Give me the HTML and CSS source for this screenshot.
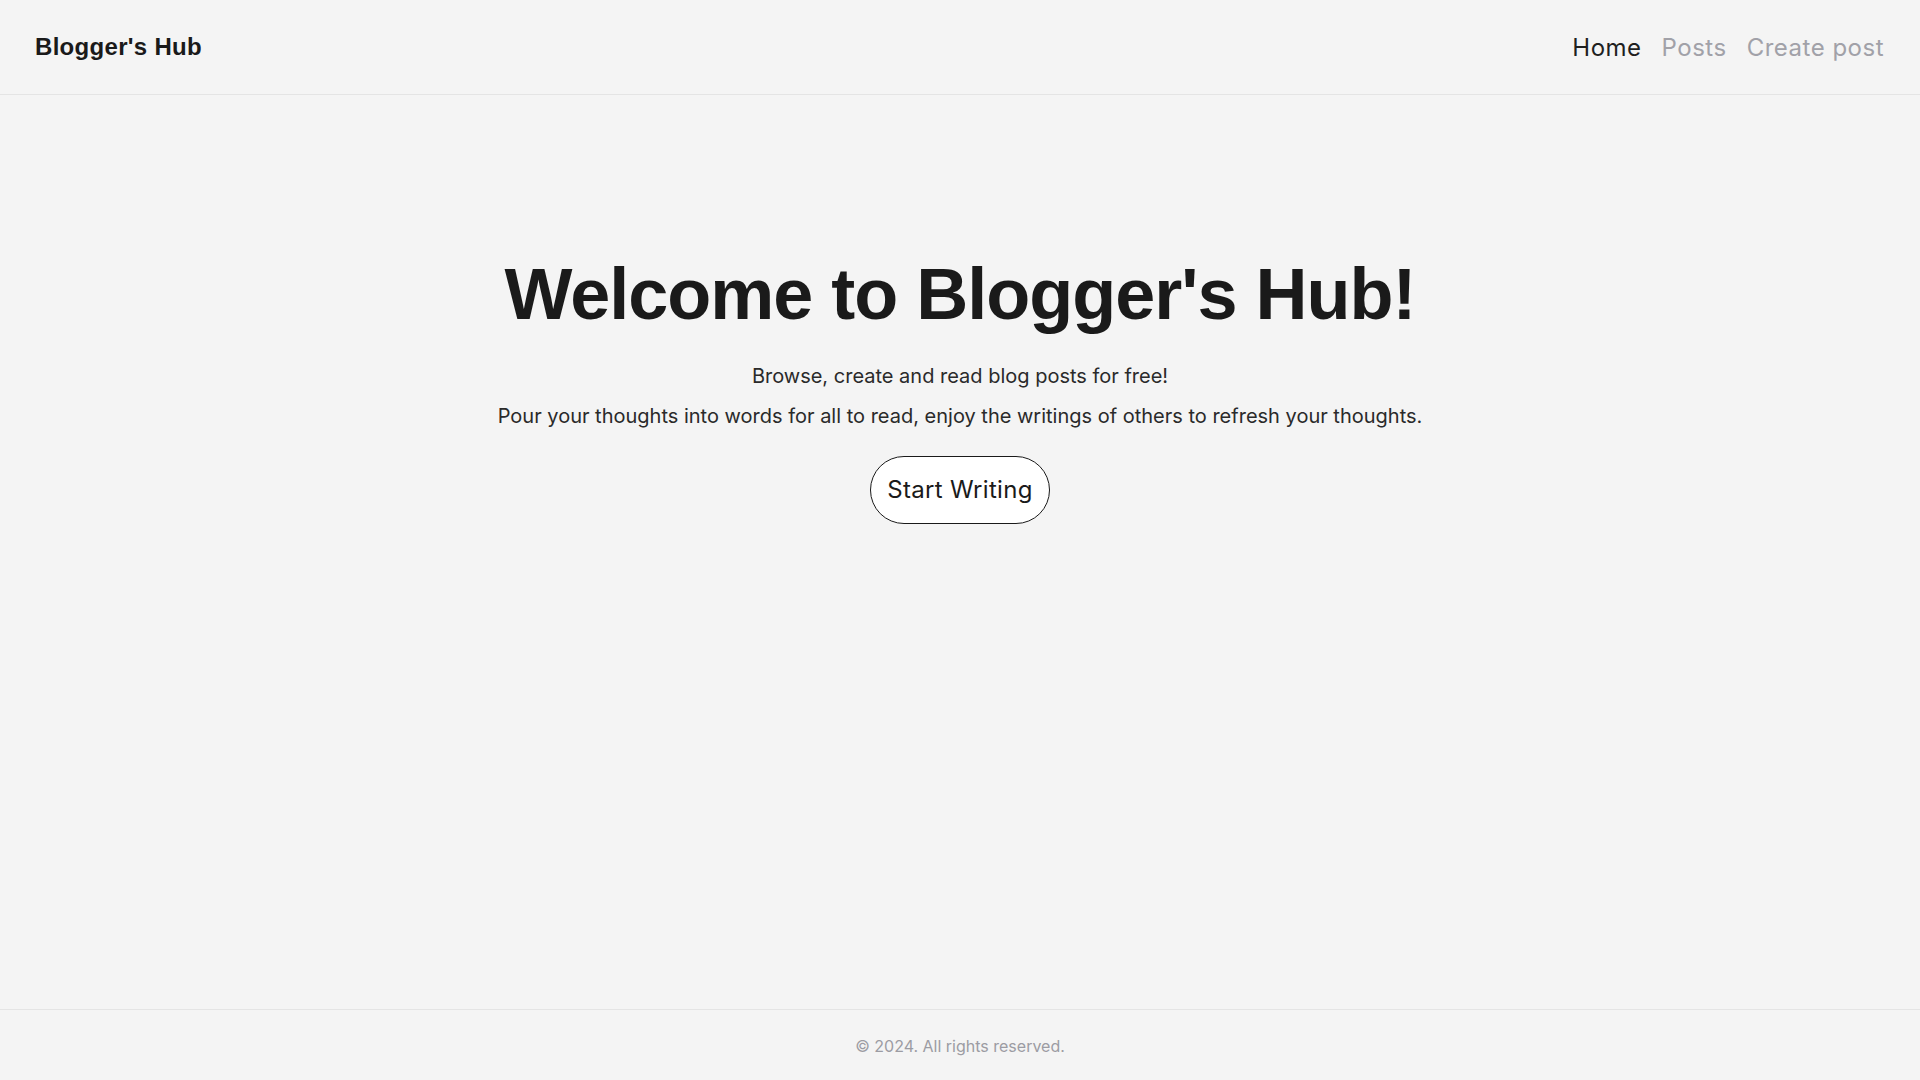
FILE: index.html
```html
<!DOCTYPE html>
<html lang="en">
<head>
<meta charset="utf-8">
<title>Blogger's Hub</title>
<link rel="stylesheet" href="styles.css">
</head>
<body>
<div class="page">
  <header class="header">
    <a class="logo" href="#">Blogger's Hub</a>
    <nav class="nav">
      <a class="nav-link active" href="#">Home</a>
      <a class="nav-link" href="#">Posts</a>
      <a class="nav-link" href="#">Create post</a>
    </nav>
  </header>
  <main class="main">
    <section class="hero">
      <h1 class="hero-title">Welcome to Blogger's Hub!</h1>
      <p class="hero-text">Browse, create and read blog posts for free!</p>
      <p class="hero-text">Pour your thoughts into words for all to read, enjoy the writings of others to refresh your thoughts.</p>
      <a class="btn" href="#">Start Writing</a>
    </section>
  </main>
  <footer class="footer">© 2024. All rights reserved.</footer>
</div>
</body>
</html>
```
FILE: styles.css
```css
* { box-sizing: border-box; }
html, body { margin: 0; padding: 0; }
body {
  background: #f4f4f4;
  color: #1a1a1a;
  font-family: Inter, "Noto Sans", sans-serif;
}
a { text-decoration: none; color: inherit; }
.page {
  min-height: 100vh;
  display: flex;
  flex-direction: column;
}
.header {
  height: 95px;
  display: flex;
  align-items: center;
  justify-content: space-between;
  padding: 0 36px 0 35px;
  border-bottom: 1px solid #e4e4e4;
}
.logo {
  font-family: "Liberation Sans", Arial, sans-serif;
  font-weight: 700;
  font-size: 24px;
  letter-spacing: 0.3px;
  color: #1a1a1a;
}
.nav { display: flex; gap: 20px; }
.nav-link {
  font-size: 24px;
  letter-spacing: 0.5px;
  color: #a1a1a8;
}
.nav-link.active { color: #1f1f1f; }
.main {
  flex: 1;
  display: flex;
  justify-content: center;
}
.hero {
  padding-top: 156px;
  display: flex;
  flex-direction: column;
  align-items: center;
  text-align: center;
}
.hero-title {
  margin: 0 0 27px;
  font-family: "Liberation Sans", Arial, sans-serif;
  font-weight: 700;
  font-size: 72px;
  line-height: 1.2;
  letter-spacing: -1px;
  color: #1a1a1a;
}
.hero-text {
  margin: 0 0 16px;
  font-size: 20px;
  line-height: 24px;
  color: #2a2a2a;
}
.btn {
  margin-top: 12px;
  display: inline-block;
  padding: 16px 16px;
  font-size: 24px;
  line-height: 34px;
  letter-spacing: 0.3px;
  border: 1px solid #1a1a1a;
  border-radius: 9999px;
  background: #fff;
  color: #1a1a1a;
}
.footer {
  height: 71px;
  border-top: 1px solid #e4e4e4;
  display: flex;
  align-items: center;
  justify-content: center;
  padding-top: 2px;
  font-size: 16px;
  color: #9c9ca3;
}
```
